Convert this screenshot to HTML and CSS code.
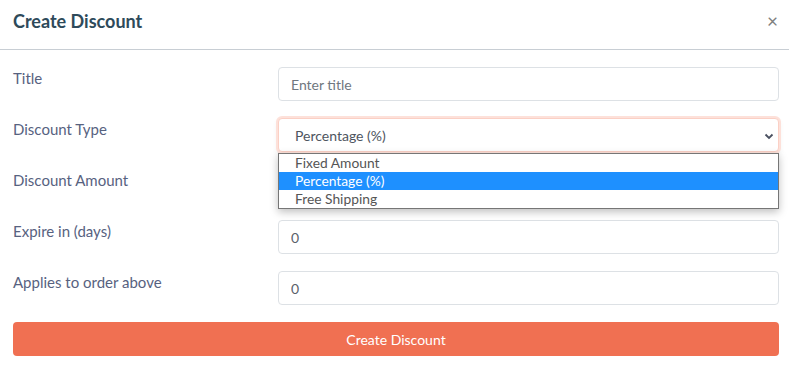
FILE: index.html
```html
<!DOCTYPE html>
<html lang="en">
<head>
    <meta charset="UTF-8">
    <meta name="viewport" content="width=device-width, initial-scale=1.0">
    <title>Create Discount</title>
    <link rel="stylesheet" href="styles.css">
</head>
<body>

<div class="modal">
    <header class="modal-header">
        <h2>Create Discount</h2>
        <span class="close">&times;</span>
    </header>

    <form class="modal-body">
        <div class="form-row">
            <label for="title">Title</label>
            <input type="text" id="title" class="field" placeholder="Enter title">
        </div>
        <div class="form-row">
            <label for="type">Discount Type</label>
            <div class="select-wrap">
                <div class="field select-box">
                    <span>Percentage (%)</span>
                    <svg class="chevron" width="10" height="8" viewBox="0 0 10 8">
                        <path d="M1.5 2.5 L5 6 L8.5 2.5" fill="none" stroke="#4a5060" stroke-width="1.8"/>
                    </svg>
                </div>
                <ul class="options">
                    <li>Fixed Amount</li>
                    <li class="selected">Percentage (%)</li>
                    <li>Free Shipping</li>
                </ul>
            </div>
        </div>
        <div class="form-row">
            <label for="amount">Discount Amount</label>
            <input type="text" id="amount" class="field" value="0">
        </div>
        <div class="form-row">
            <label for="expire">Expire in (days)</label>
            <input type="text" id="expire" class="field" value="0">
        </div>
        <div class="form-row">
            <label for="above">Applies to order above</label>
            <input type="text" id="above" class="field" value="0">
        </div>
        <button type="submit">Create Discount</button>
    </form>
</div>

</body>
</html>
```

FILE: styles.css
```css
body {
    font-family: Lato, "Open Sans", sans-serif;
    background-color: #fff;
    margin: 0;
    padding: 0;
}
.modal {
    width: 789px;
}
.modal-header {
    height: 49px;
    display: flex;
    align-items: center;
    justify-content: space-between;
    padding: 0 11px 0 13px;
    border-bottom: 1px solid #c8ced4;
}
.modal-header h2 {
    margin: 0;
    font-size: 18px;
    font-weight: 700;
    color: #2e4a5a;
    position: relative;
    top: -4px;
}
.close {
    font-size: 19px;
    color: #808080;
    line-height: 1;
    position: relative;
    top: -4px;
}
.modal-body {
    padding: 17px 10px 0 13px;
}
.form-row {
    display: grid;
    grid-template-columns: 265px 1fr;
    margin-bottom: 17px;
}
label {
    font-size: 15px;
    color: #57627f;
    padding-top: 2px;
}
.field {
    box-sizing: border-box;
    width: 100%;
    height: 34px;
    padding: 0 12px;
    border: 1px solid #dde1e5;
    border-radius: 4px;
    font-family: inherit;
    font-size: 14px;
    color: #5a616b;
    background: #fff;
    outline: none;
}
.field::placeholder {
    color: #707780;
}
.select-wrap {
    position: relative;
}
.select-box {
    display: flex;
    align-items: center;
    justify-content: space-between;
    padding: 0 4px 0 16px;
    border-color: #fbd0c5;
    box-shadow: 0 0 0 2px #fde1da, 0 3px 6px rgba(0, 0, 0, 0.08);
    color: #4e5560;
}
.chevron {
    margin-top: 1px;
}
.options {
    position: absolute;
    left: 0;
    right: 0;
    top: 35px;
    margin: 0;
    padding: 0;
    list-style: none;
    background: #fff;
    border: 1px solid #767676;
    box-shadow: 0 3px 8px rgba(0, 0, 0, 0.25);
    z-index: 2;
}
.options li {
    height: 18px;
    line-height: 18px;
    padding-left: 16px;
    font-size: 13.8px;
    color: #555;
}
.options li.selected {
    background: #1e90ff;
    color: #fff;
}
button {
    width: 100%;
    height: 34px;
    margin-top: 0;
    background-color: #f07052;
    color: #fff;
    border: none;
    border-radius: 4px;
    font-family: inherit;
    font-size: 14px;
    cursor: pointer;
}
```
